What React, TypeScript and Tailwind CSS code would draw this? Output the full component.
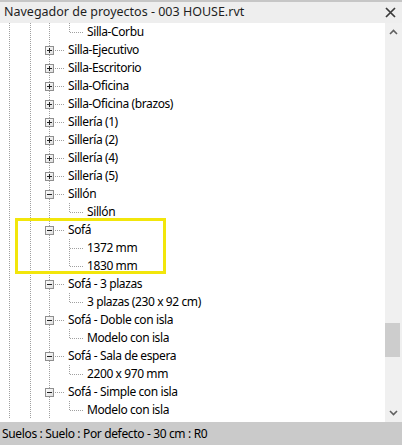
import React from "react";

type Row = { label: string; kind: "plus" | "minus" | "leaf"; last?: boolean };

const rows: Row[] = [
  { label: "Silla-Corbu", kind: "leaf", last: true },
  { label: "Silla-Ejecutivo", kind: "plus" },
  { label: "Silla-Escritorio", kind: "plus" },
  { label: "Silla-Oficina", kind: "plus" },
  { label: "Silla-Oficina (brazos)", kind: "plus" },
  { label: "Sillería (1)", kind: "plus" },
  { label: "Sillería (2)", kind: "plus" },
  { label: "Sillería (4)", kind: "plus" },
  { label: "Sillería (5)", kind: "plus" },
  { label: "Sillón", kind: "minus" },
  { label: "Sillón", kind: "leaf", last: true },
  { label: "Sofá", kind: "minus" },
  { label: "1372 mm", kind: "leaf" },
  { label: "1830 mm", kind: "leaf", last: true },
  { label: "Sofá - 3 plazas", kind: "minus" },
  { label: "3 plazas (230 x 92 cm)", kind: "leaf", last: true },
  { label: "Sofá - Doble con isla", kind: "minus" },
  { label: "Modelo con isla", kind: "leaf", last: true },
  { label: "Sofá - Sala de espera", kind: "minus" },
  { label: "2200 x 970 mm", kind: "leaf", last: true },
  { label: "Sofá - Simple con isla", kind: "minus" },
  { label: "Modelo con isla", kind: "leaf", last: true },
];

const DOT = "#a0a0a0";

function Connectors({ row }: { row: Row }) {
  const w = row.kind === "leaf" ? 86 : 67;
  return (
    <svg width={w} height={18} className="shrink-0" shapeRendering="crispEdges">
      <line x1={9.5} y1={0} x2={9.5} y2={18} stroke={DOT} strokeDasharray="1 1" />
      <line x1={30.5} y1={0} x2={30.5} y2={18} stroke={DOT} strokeDasharray="1 1" />
      <line x1={49.5} y1={0} x2={49.5} y2={18} stroke={DOT} strokeDasharray="1 1" />
      {row.kind === "leaf" ? (
        <>
          <line x1={69.5} y1={0} x2={69.5} y2={row.last ? 10 : 18} stroke={DOT} strokeDasharray="1 1" />
          <line x1={70} y1={9.5} x2={84} y2={9.5} stroke={DOT} strokeDasharray="1 1" />
        </>
      ) : (
        <>
          <defs>
            <linearGradient id="bx" x1="0" y1="0" x2="1" y2="1">
              <stop offset="0" stopColor="#ffffff" />
              <stop offset="1" stopColor="#dcdcdc" />
            </linearGradient>
          </defs>
          <line x1={55} y1={9.5} x2={65} y2={9.5} stroke={DOT} strokeDasharray="1 1" />
          <rect x={45.5} y={5.5} width={8} height={8} fill="url(#bx)" stroke="#8f8f8f" />
          <line x1={47} y1={9.5} x2={52} y2={9.5} stroke="#202020" />
          {row.kind === "plus" && <line x1={49.5} y1={7} x2={49.5} y2={12} stroke="#202020" />}
        </>
      )}
    </svg>
  );
}

export default function App() {
  return (
    <div
      className="relative w-[402px] h-[445px] flex flex-col bg-white overflow-hidden"
      style={{ fontFamily: '"Noto Sans", "Open Sans", sans-serif' }}
    >
      <div className="h-[2px] bg-[#c6c6c6] shrink-0" />
      <div className="h-[21px] bg-[#eeeeee] flex items-center justify-between pl-[4px] pr-[6px] shrink-0">
        <span className="text-[12.5px] text-[#1e1e1e] leading-none">Navegador de proyectos - 003 HOUSE.rvt</span>
        <svg width="11" height="11" viewBox="0 0 11 11">
          <path d="M1 1L10 10M10 1L1 10" stroke="#3a3a3a" strokeWidth="1.7" />
        </svg>
      </div>
      <div className="flex-1 flex min-h-0">
        <div className="flex-1 bg-white overflow-hidden">
          {rows.map((r, i) => (
            <div key={i} className="flex items-center h-[18px]">
              <Connectors row={r} />
              <span className="text-[12px] tracking-[-0.4px] text-black whitespace-nowrap leading-none ml-[1px]">
                {r.label}
              </span>
            </div>
          ))}
        </div>
        <div className="w-[17px] bg-[#f0f0f0] flex flex-col items-center shrink-0">
          <div className="h-[18px] flex items-center justify-center">
            <svg width="9" height="6" viewBox="0 0 9 6">
              <path d="M1 5L4.5 1.5L8 5" fill="none" stroke="#606060" strokeWidth="1.6" />
            </svg>
          </div>
          <div className="flex-1 w-full flex flex-col">
            <div className="h-[282px]" />
            <div className="h-[34px] w-[15px] bg-[#cdcdcd]" />
          </div>
          <div className="h-[18px] flex items-center justify-center">
            <svg width="9" height="6" viewBox="0 0 9 6">
              <path d="M1 1L4.5 4.5L8 1" fill="none" stroke="#606060" strokeWidth="1.6" />
            </svg>
          </div>
        </div>
      </div>
      <div className="h-[23px] bg-[#cacaca] flex items-center pl-[2px] shrink-0">
        <span className="text-[12px] tracking-[-0.35px] text-black leading-none">
          Suelos : Suelo : Por defecto - 30 cm : R0
        </span>
      </div>
      <div className="absolute left-[15px] top-[218px] w-[151px] h-[56px] border-[3px] border-[#f2e60b]" />
    </div>
  );
}
